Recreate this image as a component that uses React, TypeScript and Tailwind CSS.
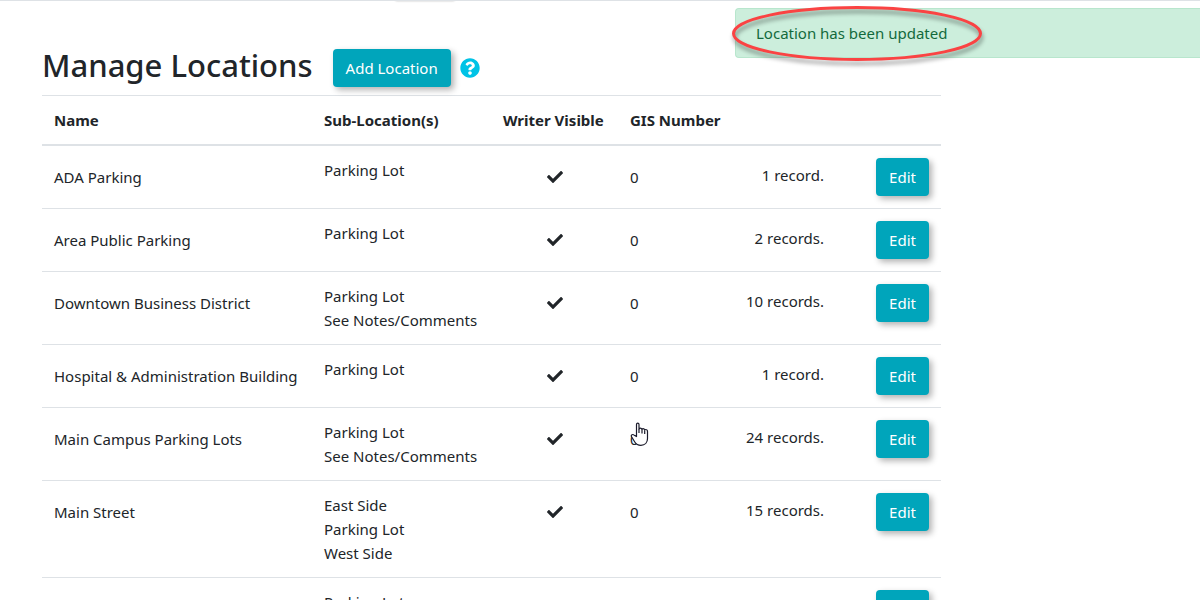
import { FaCheck, FaQuestionCircle } from "react-icons/fa";

type Location = {
  name: string;
  subs: string[];
  gis: number;
  records: number;
  hovered?: boolean;
};

const locations: Location[] = [
  { name: "ADA Parking", subs: ["Parking Lot"], gis: 0, records: 1 },
  { name: "Area Public Parking", subs: ["Parking Lot"], gis: 0, records: 2 },
  { name: "Downtown Business District", subs: ["Parking Lot", "See Notes/Comments"], gis: 0, records: 10 },
  { name: "Hospital & Administration Building", subs: ["Parking Lot"], gis: 0, records: 1 },
  { name: "Main Campus Parking Lots", subs: ["Parking Lot", "See Notes/Comments"], gis: 0, records: 24, hovered: true },
  { name: "Main Street", subs: ["East Side", "Parking Lot", "West Side"], gis: 0, records: 15 },
];

const buttonClass =
  "h-[38px] rounded bg-[#00a5bb] px-[13px] text-white shadow-[3px_3px_6px_rgba(0,0,0,0.3)] hover:bg-[#008fa3]";

const cell = "border-b border-[#dee2e6] p-3";

function HandCursor() {
  return (
    <svg className="absolute left-3 top-3.5 h-6 w-5" viewBox="0 0 20 24" aria-hidden="true">
      <path
        d="M6.500 14.500V2.600C6.500 1.700 7 1.200 7.700 1.200S9 1.700 9 2.600V7c.3-.5.8-.8 1.400-.8.8 0 1.300.4 1.500 1.100.3-.4.7-.6 1.200-.6.8 0 1.400.5 1.500 1.200.3-.3.6-.4 1-.4 1.100 0 1.900.7 1.900 1.900v7.200c0 3.900-2.500 6.800-6.600 6.800-3.200 0-5-1.500-6.300-3.600l-3-5c-.5-.9-.3-1.700.4-2.100.8-.4 1.600-.1 2.200.5z"
        fill="#fff"
        stroke="#1b1b2b"
        strokeWidth="1.200"
        strokeLinejoin="round"
      />
      <path d="M9 7v4M12 7.500V11.500M14.700 8.200V12" fill="none" stroke="#1b1b2b" strokeWidth="1.200" />
    </svg>
  );
}

function UpdatedAlert() {
  return (
    <div
      role="alert"
      className="absolute right-0 top-[7px] w-[465px] rounded-l border border-r-0 border-[#b8e6cd] bg-[#cceedc] px-5 py-3 leading-6 text-[#136a3c]"
    >
      Location has been updated
      <svg className="absolute -left-2 -top-2 h-[72px] w-[264px]" viewBox="0 0 264 72" aria-hidden="true">
        <ellipse
          cx="129"
          cy="32.500"
          rx="123.500"
          ry="26"
          fill="none"
          stroke="#fa4343"
          strokeWidth="3"
          className="drop-shadow-[1px_4px_2px_rgba(0,0,0,0.4)]"
        />
      </svg>
    </div>
  );
}

function LocationRow({ location }: { location: Location }) {
  return (
    <tr className="align-top">
      <td className={cell}>
        <div className="py-[7px]">{location.name}</div>
      </td>
      <td className={cell}>
        {location.subs.map((sub) => (
          <div key={sub}>{sub}</div>
        ))}
      </td>
      <td className={cell}>
        <FaCheck className="mx-auto mt-[11px] size-4" title="Visible" />
      </td>
      <td className={cell}>
        <div className="relative -mx-3 -my-3 px-3 pt-[19px]">
          {location.gis}
          {location.hovered && <HandCursor />}
        </div>
      </td>
      <td className={`${cell} text-right`}>
        <div className="whitespace-nowrap pr-7 pt-[5px]">
          {location.records} {location.records === 1 ? "record." : "records."}
        </div>
      </td>
      <td className={cell}>
        <button type="button" className={`${buttonClass} block w-full`}>
          Edit
        </button>
      </td>
    </tr>
  );
}

export default function App() {
  return (
    <div className="relative h-screen overflow-hidden border-t border-[#dee2e6] bg-white font-['Noto_Sans',sans-serif] text-[15px] leading-6 text-[#212529]">
      <div className="absolute -top-1 left-[395px] h-1 w-[60px] rounded-full shadow-[0_0_2px_rgba(0,0,0,0.3)]" />
      <main className="ml-[42px] mr-[259px] pt-12">
        <div className="flex h-[46px] items-start">
          <h1 className="text-[31px] font-medium leading-8">Manage Locations</h1>
          <button type="button" className={`${buttonClass} ml-5`}>
            Add Location
          </button>
          <a href="#help" aria-label="Help" className="ml-[9px] mt-[9px] text-[#00c3e6]">
            <FaQuestionCircle className="size-5" />
          </a>
        </div>
        <table className="w-full table-fixed border-separate border-spacing-0">
          <colgroup>
            <col />
            <col className="w-[179px]" />
            <col className="w-[127px]" />
            <col className="w-[116px]" />
            <col className="w-[130px]" />
            <col className="w-[77px]" />
          </colgroup>
          <thead>
            <tr className="text-left [&>*]:whitespace-nowrap [&>*]:border-b-2 [&>*]:border-t [&>*]:border-[#dee2e6] [&>*]:p-3">
              <th>Name</th>
              <th>Sub-Location(s)</th>
              <th>Writer Visible</th>
              <th>GIS Number</th>
              <td />
              <td />
            </tr>
          </thead>
          <tbody>
            {locations.map((location) => (
              <LocationRow key={location.name} location={location} />
            ))}
            {/* the next record starts at the bottom edge of the window */}
            <tr className="align-top">
              <td className={cell} />
              <td className={cell}>Parking Lot</td>
              <td className={cell} />
              <td className={cell} />
              <td className={cell} />
              <td className={cell}>
                <button type="button" aria-label="Edit" className={`${buttonClass} block w-full`} />
              </td>
            </tr>
          </tbody>
        </table>
      </main>
      <UpdatedAlert />
    </div>
  );
}
